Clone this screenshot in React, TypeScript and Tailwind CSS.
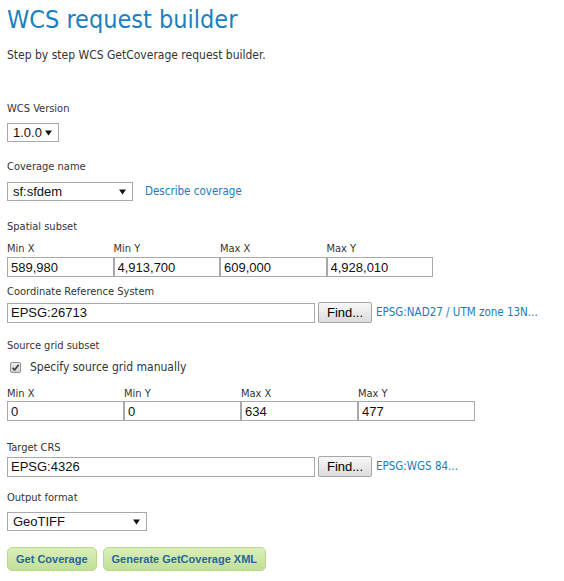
import React from "react";

const label = "h-[14px] leading-[14px] text-[11px] text-[#333] whitespace-nowrap";
const link = "text-[11.5px] text-[#1a7bbd] whitespace-nowrap";
const field =
    "h-[20px] border border-[#a9a9a9] bg-white px-[3px] font-['Liberation_Sans',Arial,sans-serif] text-[13px] text-[#111] outline-none";

function Arrow() {
    return (
        <svg width="7" height="6" viewBox="0 0 7 6" className="shrink-0">
            <polygon points="0,0.5 7,0.5 3.5,5.5" fill="#111" />
        </svg>
    );
}

function Select({ value, width }: { value: string; width: string }) {
    return (
        <div
            className={`${width} h-[19px] border border-[#a9a9a9] bg-white pl-[5px] pr-[6px] flex items-center justify-between font-['Liberation_Sans',Arial,sans-serif] text-[13px] text-[#111]`}
        >
            <span>{value}</span>
            <Arrow />
        </div>
    );
}

function FindButton() {
    return (
        <button
            type="button"
            className="h-[21px] w-[54px] ml-[3px] border border-[#a6a6a6] rounded-[2px] bg-linear-to-b from-[#f7f7f7] to-[#dcdcdc] font-['Liberation_Sans',Arial,sans-serif] text-[13px] text-black shrink-0"
        >
            Find...
        </button>
    );
}

function CoordLabels({ cols }: { cols: string }) {
    const names = ["Min X", "Min Y", "Max X", "Max Y"];
    return (
        <div className={`grid ${cols}`}>
            {names.map((n) => (
                <div key={n} className={label}>
                    {n}
                </div>
            ))}
        </div>
    );
}

export default function App() {
    const spatial = ["589,980", "4,913,700", "609,000", "4,928,010"];
    const grid = ["0", "0", "634", "477"];

    return (
        <div className="min-h-[581px] bg-white px-[7px] pt-[2px] flex flex-col font-['DejaVu_Sans_Condensed','DejaVu_Sans',sans-serif]">
            <h1 className="h-[36px] leading-[36px] text-[25px] text-[#1b7fc0] whitespace-nowrap">
                WCS request builder
            </h1>
            <p className="mt-[9px] h-[16px] leading-[16px] text-[12px] text-[#333] whitespace-nowrap">
                Step by step WCS GetCoverage request builder.
            </p>

            <div className={`${label} mt-[39px]`}>WCS Version</div>
            <div className="mt-[7px]">
                <Select value="1.0.0" width="w-[52px]" />
            </div>

            <div className={`${label} mt-[18px]`}>Coverage name</div>
            <div className="mt-[8px] flex items-center gap-[12px]">
                <Select value="sf:sfdem" width="w-[126px]" />
                <a className={link}>Describe coverage</a>
            </div>

            <div className={`${label} mt-[19px]`}>Spatial subset</div>
            <div className="mt-[8px]">
                <CoordLabels cols="grid-cols-[repeat(4,106.5px)]" />
            </div>
            <div className="mt-[1px] grid grid-cols-[repeat(4,106.5px)]">
                {spatial.map((v, i) => (
                    <input key={i} className={`${field} w-full`} defaultValue={v} />
                ))}
            </div>

            <div className={`${label} mt-[8px]`}>Coordinate Reference System</div>
            <div className="mt-[3px] flex items-center">
                <input className={`${field} w-[308px]`} defaultValue="EPSG:26713" />
                <FindButton />
                <a className={`${link} ml-[4px]`}>EPSG:NAD27 / UTM zone 13N...</a>
            </div>

            <div className={`${label} mt-[16px]`}>Source grid subset</div>
            <label className="mt-[7px] h-[14px] flex items-center pl-[3px] gap-[9px]">
                <span className="w-[11px] h-[11px] border border-[#8f8f8f] rounded-[2px] bg-linear-to-b from-[#ececec] to-[#d4d4d4] flex items-center justify-center">
                    <svg width="9" height="9" viewBox="0 0 9 9">
                        <path d="M1.5 4.8 L3.6 7 L7.6 1.8" fill="none" stroke="#3a3a3a" strokeWidth="1.6" />
                    </svg>
                </span>
                <span className="text-[12px] leading-[14px] text-[#333] whitespace-nowrap">
                    Specify source grid manually
                </span>
            </label>
            <div className="mt-[13px]">
                <CoordLabels cols="grid-cols-[repeat(4,117px)]" />
            </div>
            <div className="grid grid-cols-[repeat(4,117px)]">
                {grid.map((v, i) => (
                    <input key={i} className={`${field} w-full`} defaultValue={v} />
                ))}
            </div>

            <div className={`${label} mt-[20px]`}>Target CRS</div>
            <div className="mt-[1px] flex items-center">
                <input className={`${field} w-[308px]`} defaultValue="EPSG:4326" />
                <FindButton />
                <a className={`${link} ml-[4px]`}>EPSG:WGS 84...</a>
            </div>

            <div className={`${label} mt-[14px]`}>Output format</div>
            <div className="mt-[7px]">
                <Select value="GeoTIFF" width="w-[140px]" />
            </div>

            <div className="mt-[16px] flex gap-[6px]">
                <button
                    type="button"
                    className="h-[24px] px-[8px] border border-[#b9d88f] rounded-[5px] bg-linear-to-b from-[#dcefb9] to-[#c1df97] font-['Liberation_Sans',Arial,sans-serif] font-bold text-[11px] text-[#24679a]"
                >
                    Get Coverage
                </button>
                <button
                    type="button"
                    className="h-[24px] px-[8px] border border-[#b9d88f] rounded-[5px] bg-linear-to-b from-[#dcefb9] to-[#c1df97] font-['Liberation_Sans',Arial,sans-serif] font-bold text-[11px] text-[#24679a]"
                >
                    Generate GetCoverage XML
                </button>
            </div>
        </div>
    );
}
